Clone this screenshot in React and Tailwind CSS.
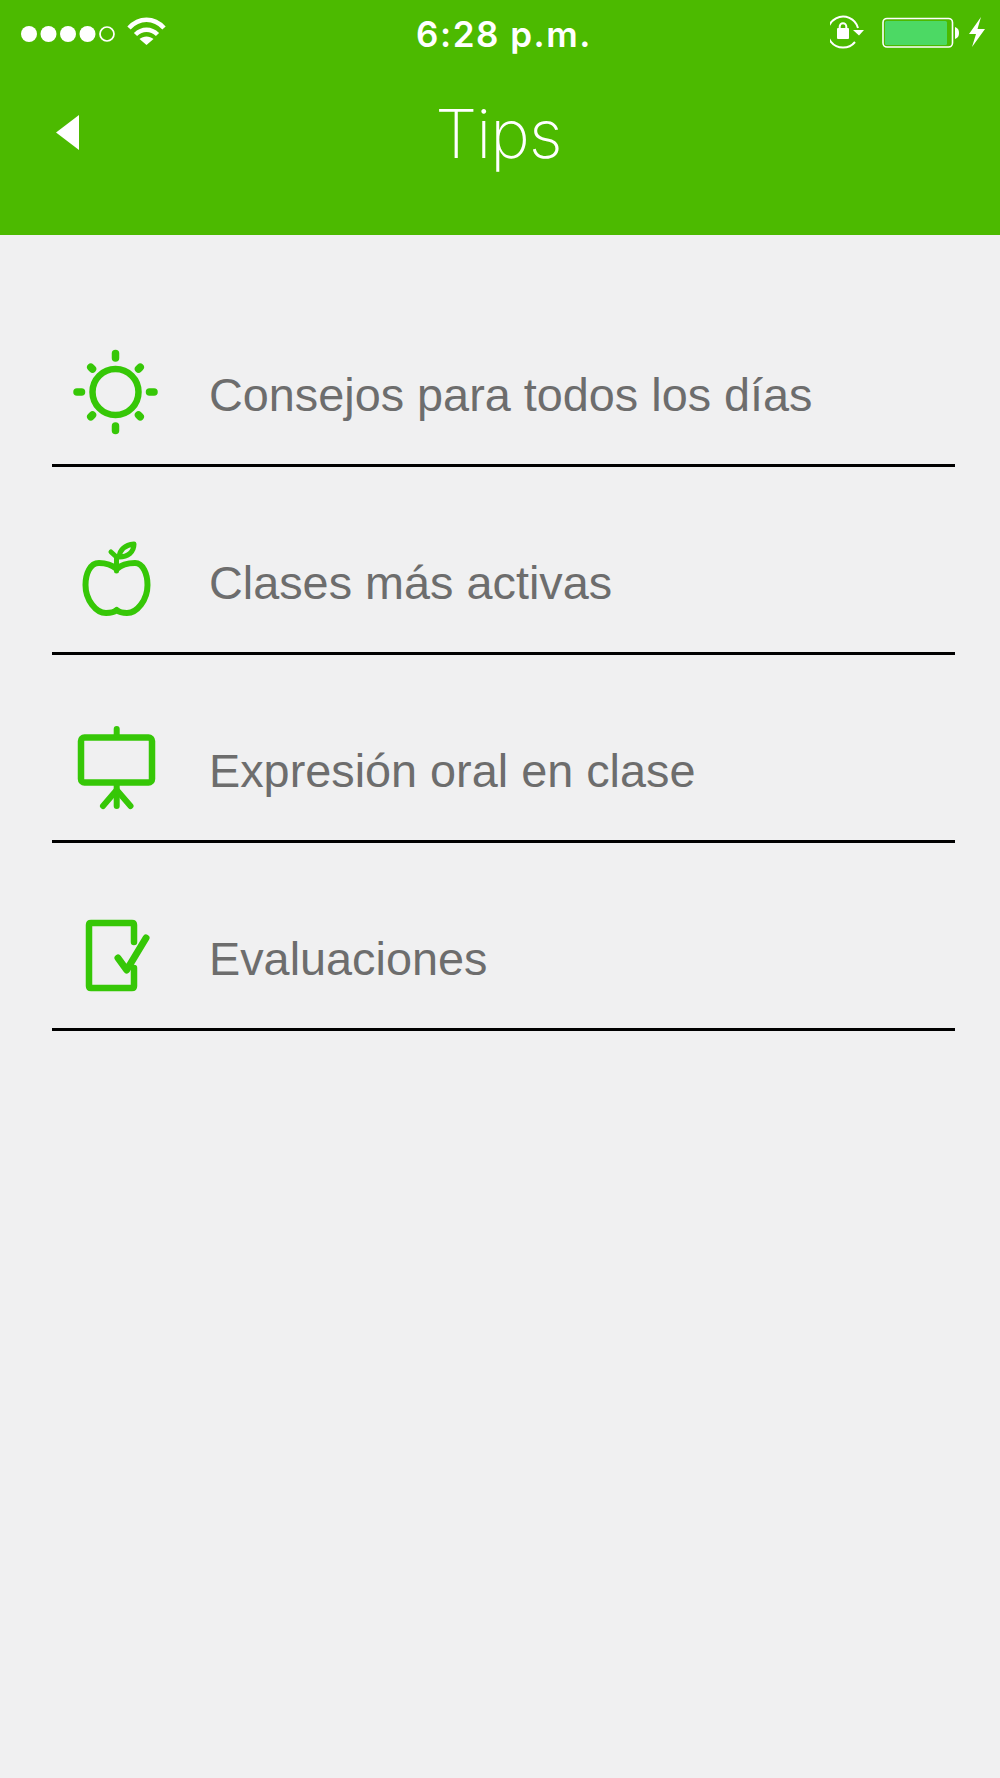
const green = "#36c707";

function Sun() {
  const rays = [0, 45, 90, 135, 180, 225, 270, 315];
  return (
    <svg width="90" height="90" viewBox="0 0 90 90" fill="none" stroke={green}>
      <circle cx="45.5" cy="46" r="23" strokeWidth="6.5" />
      {rays.map((a) => (
        <line key={a} x1="45.5" y1={a % 90 === 0 ? 7.5 : 11} x2="45.5" y2={a % 90 === 0 ? 12 : 13.5} strokeWidth="7.5" strokeLinecap="round" transform={`rotate(${a} 45.5 46)`} />
      ))}
    </svg>
  );
}

function Apple() {
  return (
    <svg width="90" height="90" viewBox="0 0 90 90" fill="none" stroke={green} strokeWidth="6" strokeLinecap="round" strokeLinejoin="round">
      <path d="M46.7 35C42 31 35 29 29 29C20 29 15.5 40 15.5 51C15.5 66 26 79 36 79C41 79 44.5 78 46.7 76C49 78 52.5 79 57 79C67 79 77.5 66 77.5 51C77.5 40 73 29 65 29C59 29 51 31 46.7 35" />
      <path d="M46.5 37V24M41 18L46.5 23" strokeWidth="5" />
      <path d="M49 23C50 15 55 11 64 10C64 18 58 23 49 23Z" strokeWidth="5" />
    </svg>
  );
}

function Board() {
  return (
    <svg width="90" height="90" viewBox="0 0 90 90" fill="none" stroke={green} strokeWidth="6.5" strokeLinecap="round" strokeLinejoin="round">
      <rect x="11" y="15.5" width="71" height="45" rx="3.5" />
      <path d="M46.7 7V13M46.7 62V84" strokeWidth="6" />
      <path d="M46.7 68L33 84M46.7 68L60.5 84" strokeWidth="6" />
    </svg>
  );
}

function Doc() {
  return (
    <svg width="90" height="90" viewBox="0 0 90 90" fill="none" stroke={green} strokeWidth="6.5" strokeLinecap="round" strokeLinejoin="round">
      <path d="M64 32V15Q64 13 62 13H21Q19 13 19 15V76Q19 78 21 78H62Q64 78 64 76V58" />
      <path d="M48 48L56.7 60L76 28" strokeWidth="7" />
    </svg>
  );
}

function StatusLeft() {
  return (
    <svg width="170" height="68" viewBox="0 0 170 68" fill="#fff">
      <circle cx="29" cy="34" r="8" />
      <circle cx="48.5" cy="34" r="8" />
      <circle cx="68" cy="34" r="8" />
      <circle cx="87.5" cy="34" r="8" />
      <circle cx="107" cy="34" r="7" fill="none" stroke="#fff" strokeWidth="1.7" />
      <path d="M129 28C139 17 154 17 164 28" fill="none" stroke="#fff" strokeWidth="4.5" />
      <path d="M135.5 34.5C142 28 151 28 157.5 34.5" fill="none" stroke="#fff" strokeWidth="4.5" />
      <path d="M139.5 39C143.5 35.5 149.5 35.5 153.5 39L146.5 45Z" />
    </svg>
  );
}

function StatusRight() {
  return (
    <svg width="170" height="68" viewBox="0 0 170 68" fill="none">
      <g transform="translate(-830 0)">
        <path d="M855 42A15.5 15.5 0 1 1 858 28" stroke="#fff" strokeWidth="2" />
        <rect x="837" y="28" width="12" height="11" rx="1" fill="#fff" />
        <path d="M839.7 28V26.5A3.3 3.3 0 0 1 846.3 26.5V28" stroke="#fff" strokeWidth="2" />
        <path d="M853 30H864L859 35.5Z" fill="#fff" />
        <rect x="883" y="18.5" width="69.5" height="28.5" rx="4" stroke="#fff" strokeWidth="1.6" />
        <rect x="885" y="21" width="62" height="24" rx="1.5" fill="#4cd964" />
        <path d="M955 27C958 28 959 30 959 33C959 36 958 38 955 39Z" fill="#fff" />
        <path d="M981 17L969 34H976L972 47L985 29H977.5Z" fill="#fff" />
      </g>
    </svg>
  );
}

const items = [
  { label: "Consejos para todos los días", Icon: Sun },
  { label: "Clases más activas", Icon: Apple },
  { label: "Expresión oral en clase", Icon: Board },
  { label: "Evaluaciones", Icon: Doc },
];

export default function App() {
  return (
    <div className="min-h-[1778px] w-[1000px] bg-[#f0f0f1] font-['Liberation_Sans',sans-serif]">
      <header className="h-[235px] bg-[#4cba00] text-white">
        <div className="flex h-[68px] items-center justify-between">
          <StatusLeft />
          <span className="pl-[8px] font-['Inter',sans-serif] text-[35px] font-semibold tracking-[1.5px]">6:28 p.m.</span>
          <StatusRight />
        </div>
        <div className="grid h-[130px] grid-cols-3 items-center">
          <svg width="120" height="130" viewBox="0 0 120 130" fill="#fff">
            <path d="M56 64.5L79 47V82Z" />
          </svg>
          <h1 className="pr-[3px] text-center font-['Inter',sans-serif] text-[67px] font-extralight leading-none tracking-[-1px]">Tips</h1>
        </div>
      </header>
      <main className="px-[52px] pt-[44px]">
        {items.map(({ label, Icon }) => (
          <div key={label} className="flex h-[188px] w-[903px] items-center border-b-[3px] border-black pt-[39px]">
            <div className="ml-[18px] flex h-[90px] w-[90px] shrink-0"><Icon /></div>
            <span className="ml-[49px] pt-[9px] text-[46.8px] text-[#6d6d6d]">{label}</span>
          </div>
        ))}
      </main>
    </div>
  );
}
